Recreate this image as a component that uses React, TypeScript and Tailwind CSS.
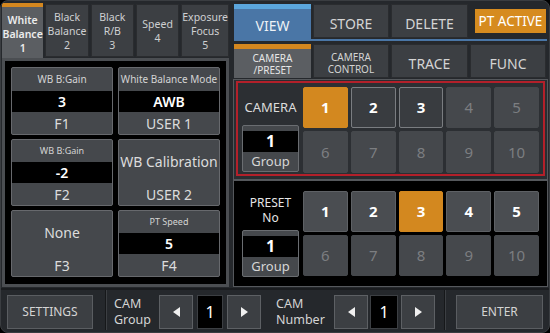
import React from 'react';

const font = { fontFamily: '"Noto Sans", "Open Sans", sans-serif' };

const TopTab: React.FC<{ lines: string[]; active?: boolean }> = ({ lines, active }) =>
  active ? (
    <div className="flex-1 flex flex-col h-[57px]">
      <div className="h-[4px] bg-[#d4871f]" />
      <div className="flex-1 bg-[#5b5e62] flex flex-col items-center justify-center text-[10.5px] leading-[14px] text-[#ececec] font-semibold">
        {lines.map((l) => (
          <span key={l}>{l}</span>
        ))}
      </div>
    </div>
  ) : (
    <div className="flex-1 mt-[1px] h-[53px] bg-[#3c3f43] border border-[#2a2c2f] flex flex-col items-center justify-center text-[10.5px] leading-[14px] text-[#cfd0d2]">
      {lines.map((l) => (
        <span key={l}>{l}</span>
      ))}
    </div>
  );

const FnButton: React.FC<{ head?: string; value?: string; big?: string; foot: string; smallHead?: boolean }> = ({
  head,
  value,
  big,
  foot,
  smallHead,
}) => (
  <div className="flex flex-col border border-[#67696d] bg-[#45484c] rounded-[2px] overflow-hidden">
    {big ? (
      <div className="flex-1 flex items-center justify-center text-[14px] text-[#dcdcdc]">{big}</div>
    ) : (
      <>
        <div className={`flex-1 flex items-center justify-center text-[#d4d4d4] ${smallHead ? 'text-[9px]' : 'text-[10px]'}`}>
          {head}
        </div>
        <div className="h-[21px] bg-black flex items-center justify-center text-[14px] font-semibold text-white">{value}</div>
      </>
    )}
    <div className="h-[22px] flex items-center justify-center text-[14px] text-[#dcdcdc]">{foot}</div>
  </div>
);

type Btn = { n: number; state: 'on' | 'set' | 'off' | 'dim' };

const NumButton: React.FC<Btn> = ({ n, state }) => {
  const cls =
    state === 'on'
      ? 'bg-[#d3881f] border-[#d3881f] text-white font-bold'
      : state === 'set'
        ? 'bg-[#393c40] border-[#7a7d81] text-white font-bold'
        : state === 'off'
          ? 'bg-[#4a4d51] border-[#5e6165] text-white font-bold'
          : 'bg-[#45484c] border-[#45484c] text-[#7c7e81]';
  return (
    <div className={`border rounded-[2px] flex items-center justify-center text-[15px] ${cls}`}>{n}</div>
  );
};

const GroupBox: React.FC = () => (
  <div className="h-[47px] border border-[#6a6d71] bg-[#45484c] rounded-[2px] flex flex-col overflow-hidden">
    <div className="h-[5px]" />
    <div className="h-[21px] bg-black flex items-center justify-center text-[16px] font-bold text-white">1</div>
    <div className="flex-1 flex items-center justify-center text-[13px] text-[#d6d6d6]">Group</div>
  </div>
);

const Arrow: React.FC<{ dir: 'l' | 'r' }> = ({ dir }) => (
  <div className="w-[34px] h-[34px] border border-[#5d6064] bg-[#3c3f43] flex items-center justify-center">
    <svg width="7" height="10" viewBox="0 0 7 10">
      <polygon points={dir === 'l' ? '7,0 7,10 0,5' : '0,0 0,10 7,5'} fill="#f0f0f0" />
    </svg>
  </div>
);

export default function App() {
  const camera: Btn[] = [
    { n: 1, state: 'on' },
    { n: 2, state: 'set' },
    { n: 3, state: 'set' },
    { n: 4, state: 'dim' },
    { n: 5, state: 'dim' },
    ...[6, 7, 8, 9, 10].map((n) => ({ n, state: 'dim' as const })),
  ];
  const preset: Btn[] = [
    { n: 1, state: 'off' },
    { n: 2, state: 'off' },
    { n: 3, state: 'on' },
    { n: 4, state: 'off' },
    { n: 5, state: 'off' },
    ...[6, 7, 8, 9, 10].map((n) => ({ n, state: 'dim' as const })),
  ];

  return (
    <div className="w-[550px] h-[333px] bg-black" style={font}>
      <div className="w-full h-full rounded-[8px] border border-[#3a3d41] bg-[#25282c] flex flex-col overflow-hidden">
        <div className="flex h-[287px]">
          {/* left column */}
          <div className="ml-[1px] w-[227px] pt-[2px] flex flex-col">
            <div className="flex gap-[2px] h-[55px] items-start">
              <TopTab lines={['White', 'Balance', '1']} active />
              <TopTab lines={['Black', 'Balance', '2']} />
              <TopTab lines={['Black', 'R/B', '3']} />
              <TopTab lines={['Speed', '4']} />
              <TopTab lines={['Exposure', 'Focus', '5']} />
            </div>
            <div className="h-[229px] border-[3px] border-[#4b4e52] bg-black p-[6px] pb-[7px]">
              <div className="grid grid-cols-2 gap-x-[5px] gap-y-[4px] grid-rows-[68px_67px_67px] h-full">
                <FnButton head="WB B:Gain" value="3" foot="F1" />
                <FnButton head="White Balance Mode" value="AWB" foot="USER 1" />
                <FnButton head="WB B:Gain" value="-2" foot="F2" smallHead />
                <FnButton big="WB Calibration" foot="USER 2" />
                <FnButton big="None" foot="F3" />
                <FnButton head="PT Speed" value="5" foot="F4" smallHead />
              </div>
            </div>
          </div>

          {/* right column */}
          <div className="ml-[4px] w-[315px] pt-[3px] flex flex-col">
            <div className="flex items-start h-[35px] pl-[1px]">
              <div className="w-[77px] flex flex-col">
                <div className="h-[5px] bg-[#5ba6dc]" />
                <div className="h-[30px] bg-[#4a76a6] flex items-center justify-center pt-[2px] text-[14px] text-[#eef2f6]">VIEW</div>
              </div>
              <div className="ml-[2px] w-[76px] h-[34px] bg-[#3c3f43] border border-[#2a2c2f] flex items-center justify-center pt-[5px] text-[14px] text-[#d4d4d4]">
                STORE
              </div>
              <div className="ml-[2px] w-[77px] h-[34px] bg-[#3c3f43] border border-[#2a2c2f] flex items-center justify-center pt-[5px] text-[14px] text-[#d4d4d4]">
                DELETE
              </div>
              <div className="ml-[7px] mt-[5px] w-[71px] h-[24px] bg-[#d68b1f] flex items-center justify-center text-[13.5px] text-white">
                PT ACTIVE
              </div>
            </div>
            <div className="ml-[1px] mr-[1px] h-[2px] bg-[#4a76a6]" />
            <div className="flex gap-[2px] mt-[3px] h-[34px] pl-[1px] pr-[1px]">
              <div className="w-[77px] flex flex-col">
                <div className="h-[5px] bg-[#d4871f]" />
                <div className="flex-1 bg-[#5b5e62] flex flex-col items-center justify-center text-[10px] leading-[12px] text-[#e6e6e6]">
                  <span>CAMERA</span>
                  <span>/PRESET</span>
                </div>
              </div>
              <div className="w-[76px] bg-[#3c3f43] border border-[#2a2c2f] flex flex-col items-center justify-center pt-[3px] text-[10px] leading-[12px] text-[#d4d4d4]">
                <span>CAMERA</span>
                <span>CONTROL</span>
              </div>
              <div className="w-[77px] bg-[#3c3f43] border border-[#2a2c2f] flex items-center justify-center pt-[4px] text-[14px] text-[#d4d4d4]">
                TRACE
              </div>
              <div className="w-[76px] bg-[#3c3f43] border border-[#2a2c2f] flex items-center justify-center pt-[4px] text-[14px] text-[#d4d4d4]">
                FUNC
              </div>
            </div>

            <div className="mt-[1px] h-[208px] border border-[#55585c] flex flex-col">
              <div className="bg-[#2a2d31] px-[2px] pt-[1px] pb-[3px]">
                <div className="h-[95px] border-2 border-[#b3202a] bg-[#2c2f33] flex pl-[4px] pr-[4px] pt-[4px] pb-[1px]">
                  <div className="w-[57px] flex flex-col pb-[1px]">
                    <div className="flex-1 flex items-center justify-center text-[13px] text-[#dcdcdc] pt-[4px]">CAMERA</div>
                    <GroupBox />
                  </div>
                  <div className="ml-[4px] flex-1 grid grid-cols-5 grid-rows-[41px_42px] gap-[3px]">
                    {camera.map((b) => (
                      <NumButton key={b.n} {...b} />
                    ))}
                  </div>
                </div>
              </div>
              <div className="flex-1 border-t-2 border-[#55585c] bg-black flex pl-[8px] pr-[8px] pt-[10px] pb-[9px]">
                <div className="w-[57px] flex flex-col">
                  <div className="flex-1 flex flex-col items-center justify-center text-[12px] leading-[15px] text-[#e6e6e6] pb-[2px]">
                    <span>PRESET</span>
                    <span>No</span>
                  </div>
                  <GroupBox />
                </div>
                <div className="ml-[4px] flex-1 grid grid-cols-5 grid-rows-[41px_41px] gap-[3px]">
                  {preset.map((b) => (
                    <NumButton key={b.n} {...b} />
                  ))}
                </div>
              </div>
            </div>
          </div>
        </div>

        {/* bottom bar */}
        <div className="flex-1 border-t-2 border-[#1a1c1f] flex items-start pt-[5px]">
          <div className="ml-[6px] w-[86px] h-[34px] border border-[#5a5d61] bg-[#3c3f43] flex items-center justify-center text-[12px] text-[#d4d4d4]">
            SETTINGS
          </div>
          <div className="ml-[12px] w-[2px] h-[40px] -mt-[5px] bg-[#16181a] border-r border-[#3c3f43]" />
          <div className="ml-[7px] w-[45px] flex flex-col text-[12.5px] leading-[16px] text-[#d4d4d4] pt-[1px]">
            <span>CAM</span>
            <span>Group</span>
          </div>
          <Arrow dir="l" />
          <div className="ml-[4px] w-[26px] h-[34px] bg-black border border-[#3c3f43] flex items-center justify-center text-[16px] text-white">1</div>
          <div className="ml-[4px]">
            <Arrow dir="r" />
          </div>
          <div className="ml-[15px] w-[58px] flex flex-col text-[12.5px] leading-[16px] text-[#d4d4d4] pt-[1px]">
            <span>CAM</span>
            <span>Number</span>
          </div>
          <Arrow dir="l" />
          <div className="ml-[2px] w-[28px] h-[34px] bg-black border border-[#3c3f43] flex items-center justify-center text-[16px] text-white">1</div>
          <div className="ml-[3px]">
            <Arrow dir="r" />
          </div>
          <div className="ml-[9px] w-[2px] h-[40px] -mt-[5px] bg-[#16181a] border-r border-[#3c3f43]" />
          <div className="ml-[10px] w-[87px] h-[34px] border border-[#5a5d61] bg-[#3c3f43] flex items-center justify-center text-[12px] text-[#d4d4d4]">
            ENTER
          </div>
        </div>
      </div>
    </div>
  );
}
